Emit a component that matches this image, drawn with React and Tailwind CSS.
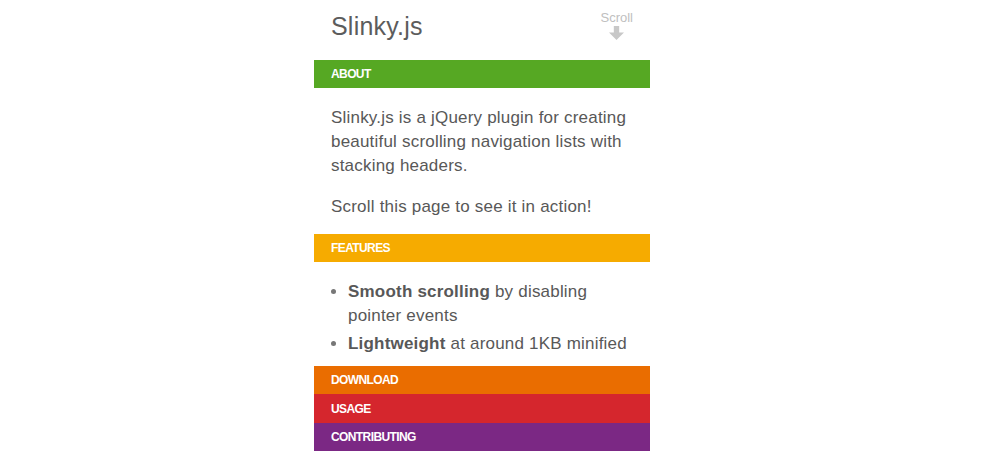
export default function App() {
  const font = { fontFamily: '"Liberation Sans", Arial, Helvetica, sans-serif' };
  const Header = ({ children, cls }) => (
    <div className={`h-[28px] flex items-center px-[17px] text-[12px] font-bold text-white uppercase tracking-[-0.6px] ${cls}`}>
      {children}
    </div>
  );
  return (
    <div className="w-[1005px] h-[451px] bg-white flex overflow-hidden" style={font}>
      <div className="w-[336px] ml-[314px] flex flex-col text-[#585858]">
        <div className="h-[60px] flex items-start justify-between pl-[17px] pr-[17px]">
          <div className="text-[25px] leading-none mt-[14px] tracking-[0.2px] text-[#5c5c5c]">Slinky.js</div>
          <div className="flex flex-col items-center mt-[11px] text-[#c0c0c0]">
            <div className="text-[13px] leading-none">Scroll</div>
            <svg width="15" height="15" viewBox="0 0 14 14" className="mt-[2px]">
              <rect x="4.5" y="0" width="5" height="7" fill="#c8c8c8" />
              <polygon points="0,6 14,6 7,13" fill="#c8c8c8" />
            </svg>
          </div>
        </div>
        <Header cls="bg-[#56a823]">About</Header>
        <div className="h-[146px] px-[17px] pt-[18px] text-[17px] leading-[24px] tracking-[0.2px]">
          <p>Slinky.js is a jQuery plugin for creating beautiful scrolling navigation lists with stacking headers.</p>
          <p className="mt-[17px]">Scroll this page to see it in action!</p>
        </div>
        <Header cls="bg-[#f6ab00]">Features</Header>
        <div className="h-[104px] overflow-hidden px-[17px] pt-[18px] text-[17px] leading-[24px] tracking-[0.2px]">
          <ul className="list-disc pl-[17px] marker:text-[#777] flex flex-col gap-[4px]">
            <li><b className="font-bold">Smooth scrolling</b> by disabling pointer events</li>
            <li><b className="font-bold">Lightweight</b> at around 1KB minified</li>
          </ul>
        </div>
        <Header cls="bg-[#ea6d00]">Download</Header>
        <Header cls="bg-[#d5262d] h-[29px]">Usage</Header>
        <Header cls="bg-[#7b2884]">Contributing</Header>
      </div>
    </div>
  );
}
